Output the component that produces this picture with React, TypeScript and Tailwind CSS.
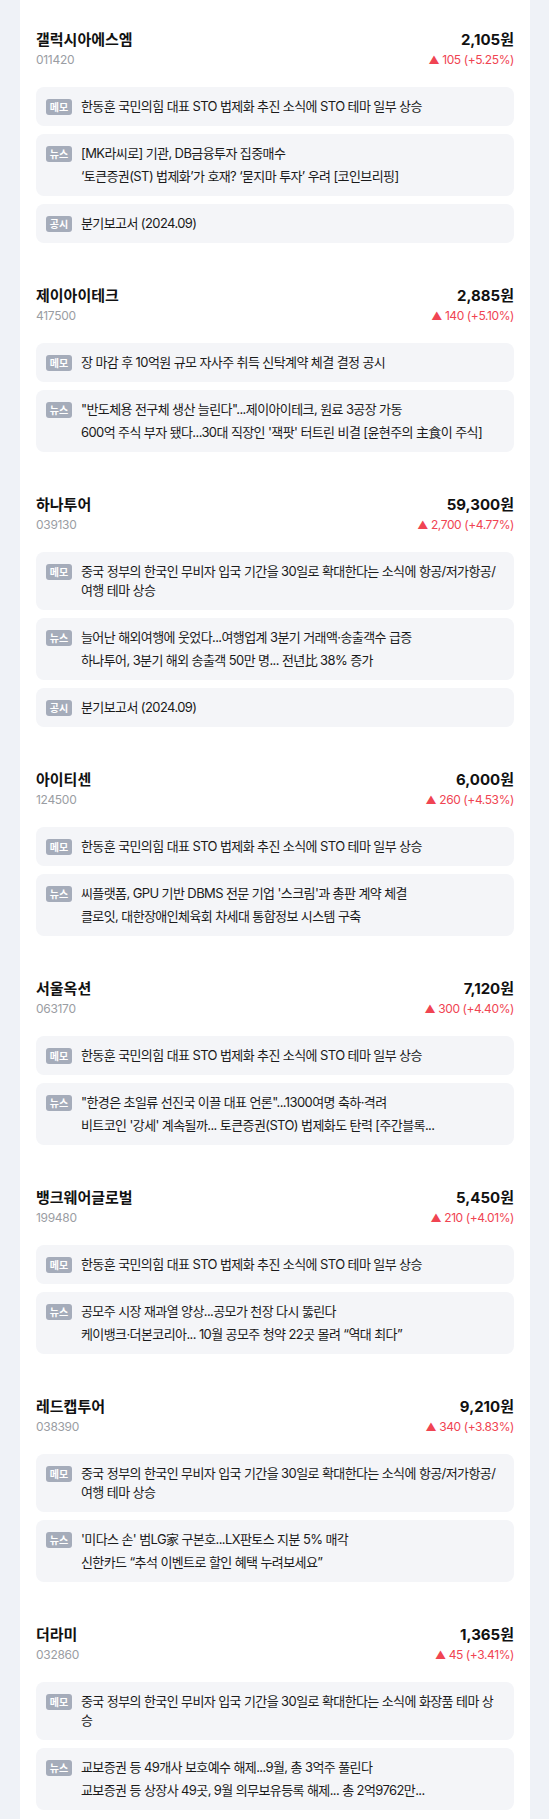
type Item = { kind: '메모' | '뉴스' | '공시'; lines: string[] };

type Stock = {
  name: string;
  code: string;
  price: string;
  change: string;
  items: Item[];
};

const STO_MEMO = '한동훈 국민의힘 대표 STO 법제화 추진 소식에 STO 테마 일부 상승';
const TRAVEL_MEMO = '중국 정부의 한국인 무비자 입국 기간을 30일로 확대한다는 소식에 항공/저가항공/여행 테마 상승';

const STOCKS: Stock[] = [
  {
    name: '갤럭시아에스엠',
    code: '011420',
    price: '2,105원',
    change: '105 (+5.25%)',
    items: [
      { kind: '메모', lines: [STO_MEMO] },
      {
        kind: '뉴스',
        lines: ['[MK라씨로] 기관, DB금융투자 집중매수', '‘토큰증권(ST) 법제화’가 호재? ‘묻지마 투자’ 우려 [코인브리핑]'],
      },
      { kind: '공시', lines: ['분기보고서 (2024.09)'] },
    ],
  },
  {
    name: '제이아이테크',
    code: '417500',
    price: '2,885원',
    change: '140 (+5.10%)',
    items: [
      { kind: '메모', lines: ['장 마감 후 10억원 규모 자사주 취득 신탁계약 체결 결정 공시'] },
      {
        kind: '뉴스',
        lines: [
          '"반도체용 전구체 생산 늘린다"...제이아이테크, 원료 3공장 가동',
          "600억 주식 부자 됐다...30대 직장인 '잭팟' 터트린 비결 [윤현주의 主食이 주식]",
        ],
      },
    ],
  },
  {
    name: '하나투어',
    code: '039130',
    price: '59,300원',
    change: '2,700 (+4.77%)',
    items: [
      { kind: '메모', lines: [TRAVEL_MEMO] },
      {
        kind: '뉴스',
        lines: ['늘어난 해외여행에 웃었다...여행업계 3분기 거래액·송출객수 급증', '하나투어, 3분기 해외 송출객 50만 명... 전년比 38% 증가'],
      },
      { kind: '공시', lines: ['분기보고서 (2024.09)'] },
    ],
  },
  {
    name: '아이티센',
    code: '124500',
    price: '6,000원',
    change: '260 (+4.53%)',
    items: [
      { kind: '메모', lines: [STO_MEMO] },
      {
        kind: '뉴스',
        lines: ["씨플랫폼, GPU 기반 DBMS 전문 기업 '스크림'과 총판 계약 체결", '클로잇, 대한장애인체육회 차세대 통합정보 시스템 구축'],
      },
    ],
  },
  {
    name: '서울옥션',
    code: '063170',
    price: '7,120원',
    change: '300 (+4.40%)',
    items: [
      { kind: '메모', lines: [STO_MEMO] },
      {
        kind: '뉴스',
        lines: ['"한경은 초일류 선진국 이끌 대표 언론"...1300여명 축하·격려', "비트코인 '강세' 계속될까... 토큰증권(STO) 법제화도 탄력 [주간블록..."],
      },
    ],
  },
  {
    name: '뱅크웨어글로벌',
    code: '199480',
    price: '5,450원',
    change: '210 (+4.01%)',
    items: [
      { kind: '메모', lines: [STO_MEMO] },
      {
        kind: '뉴스',
        lines: ['공모주 시장 재과열 양상...공모가 천장 다시 뚫린다', '케이뱅크·더본코리아... 10월 공모주 청약 22곳 몰려 “역대 최다”'],
      },
    ],
  },
  {
    name: '레드캡투어',
    code: '038390',
    price: '9,210원',
    change: '340 (+3.83%)',
    items: [
      { kind: '메모', lines: [TRAVEL_MEMO] },
      {
        kind: '뉴스',
        lines: ["'미다스 손' 범LG家 구본호...LX판토스 지분 5% 매각", '신한카드 “추석 이벤트로 할인 혜택 누려보세요”'],
      },
    ],
  },
  {
    name: '더라미',
    code: '032860',
    price: '1,365원',
    change: '45 (+3.41%)',
    items: [
      { kind: '메모', lines: ['중국 정부의 한국인 무비자 입국 기간을 30일로 확대한다는 소식에 화장품 테마 상승'] },
      {
        kind: '뉴스',
        lines: ['교보증권 등 49개사 보호예수 해제...9월, 총 3억주 풀린다', '교보증권 등 상장사 49곳, 9월 의무보유등록 해제... 총 2억9762만...'],
      },
    ],
  },
];

function ItemCard({ item }: { item: Item }) {
  return (
    <div className="flex gap-[9px] rounded-lg bg-[#f4f5f8] py-[10px] pl-[10px] pr-[15px]">
      <span className="mt-[2px] flex h-4 w-[26px] shrink-0 items-center justify-center rounded-[3px] bg-[#a5acba] text-[10px] font-semibold leading-none text-white">
        {item.kind}
      </span>
      <div className="flex min-w-0 flex-1 flex-col gap-1 text-[13px] leading-[19px] tracking-[-0.6px] text-[#1a1a1a]">
        {item.lines.map((line) => (
          <p key={line}>{line}</p>
        ))}
      </div>
    </div>
  );
}

function StockSection({ stock }: { stock: Stock }) {
  return (
    <section>
      {/* header: name / code vs price / change */}
      <div className="flex items-start justify-between">
        <div>
          <h3 className="text-[15px] font-bold leading-[22px] text-[#111]">{stock.name}</h3>
          <p className="text-[12px] leading-[18px] tracking-[-0.3px] text-[#9a9da3]">{stock.code}</p>
        </div>
        <div className="text-right">
          <p className="text-[15px] font-bold leading-[22px] text-[#111]">{stock.price}</p>
          <p className="text-[12px] leading-[18px] tracking-[-0.4px] text-[#f04452]">
            <span className="text-[11px]">▲</span> {stock.change}
          </p>
        </div>
      </div>

      <div className="mt-[18px] flex flex-col gap-2">
        {stock.items.map((item) => (
          <ItemCard key={item.kind} item={item} />
        ))}
      </div>
    </section>
  );
}

export default function App() {
  return (
    <div className="min-h-screen bg-[#eff2f7] font-[Inter,'Noto_Sans_CJK_KR',sans-serif]">
      <div className="ml-5 flex min-h-screen w-[510px] flex-col gap-[42px] bg-white px-4 pb-[9px] pt-[29px]">
        {STOCKS.map((stock) => (
          <StockSection key={stock.code} stock={stock} />
        ))}
      </div>
    </div>
  );
}
